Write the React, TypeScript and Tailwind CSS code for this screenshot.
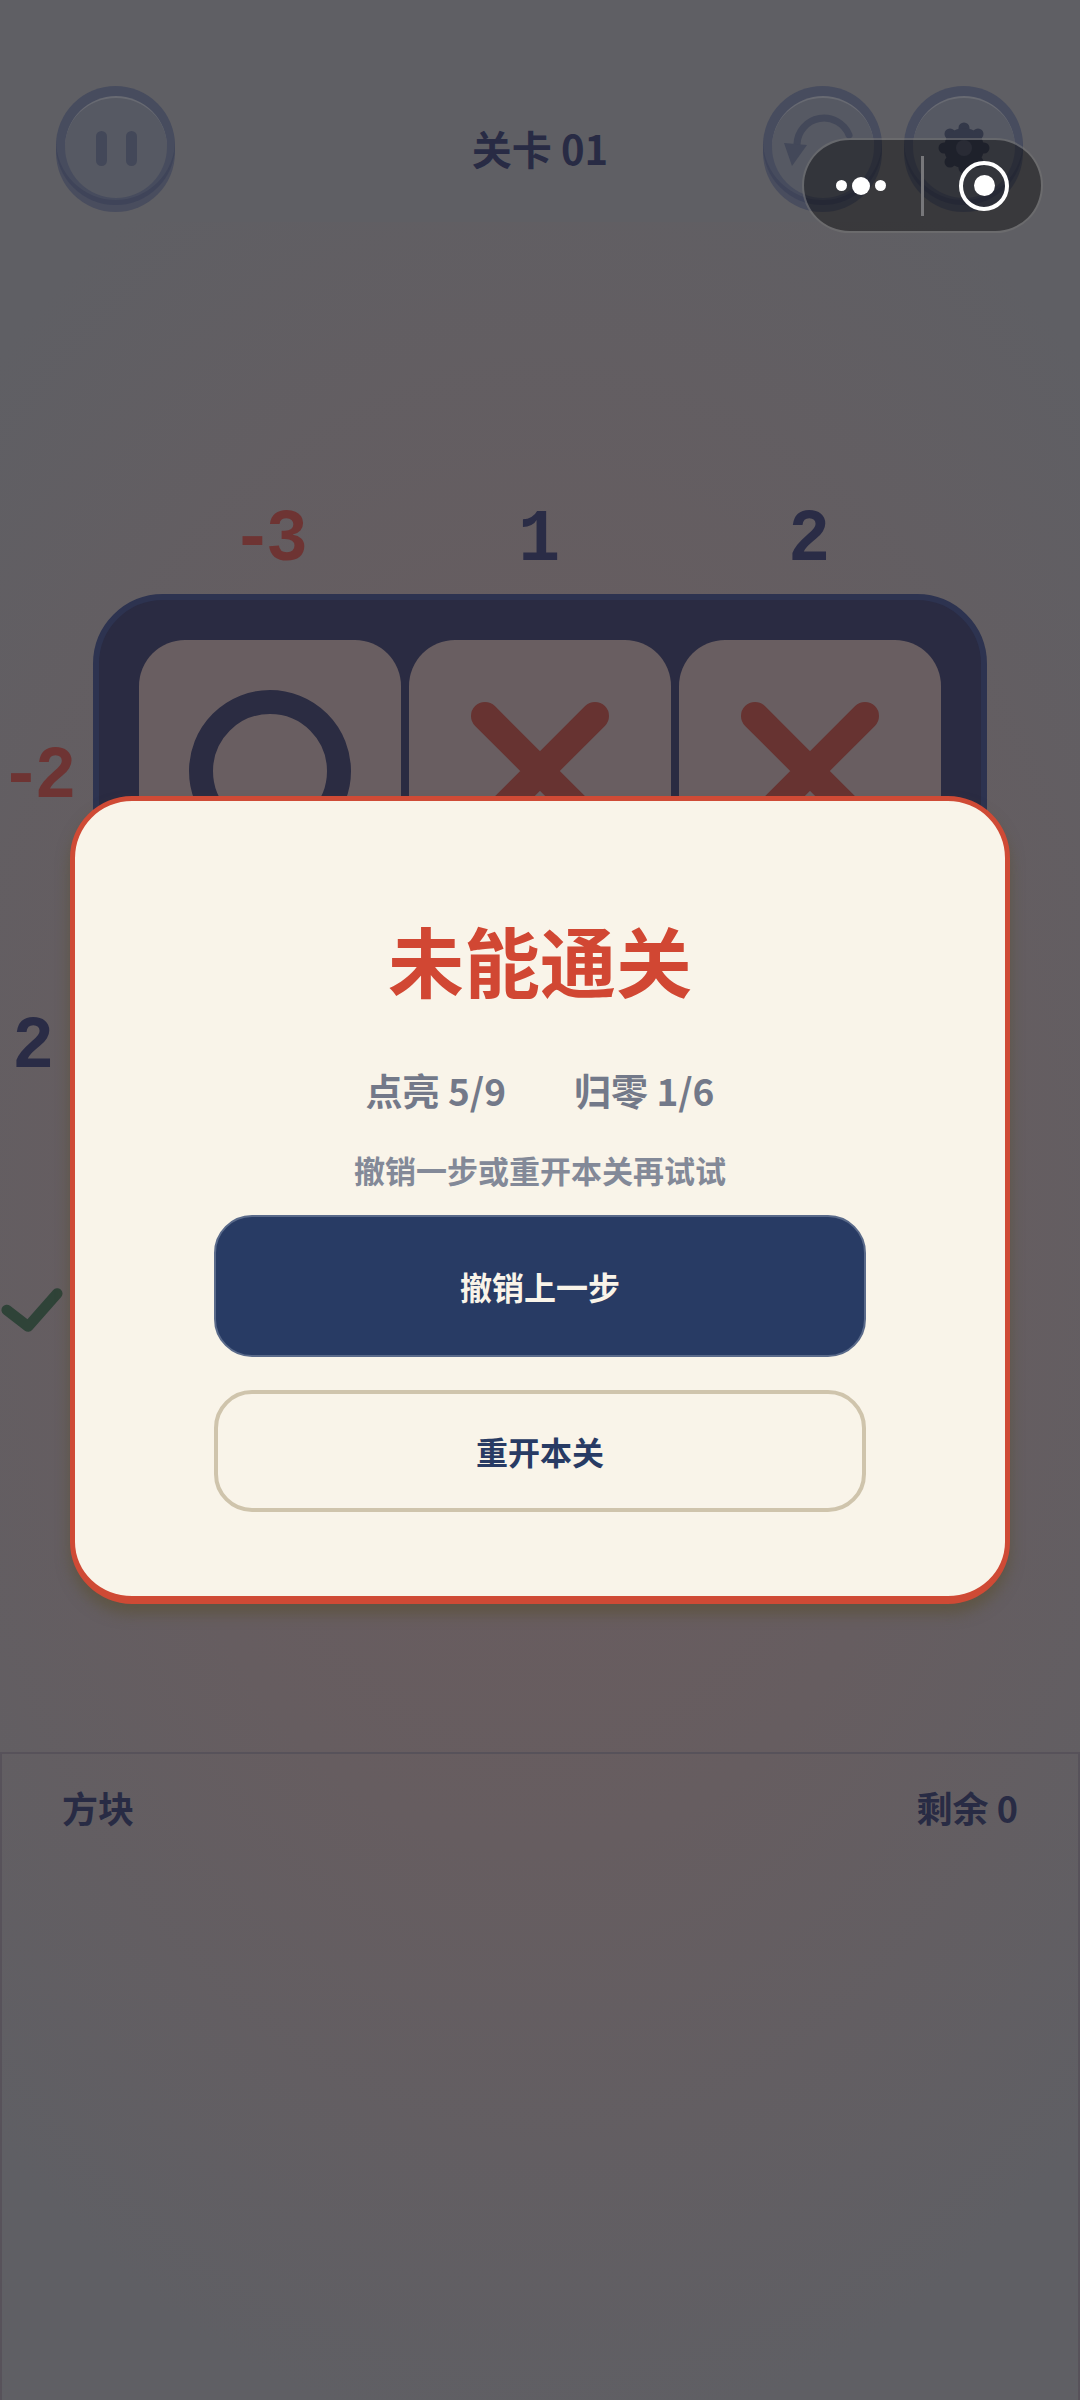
import React from "react";

const font = { fontFamily: '"Noto Sans CJK SC", "Noto Sans", sans-serif' };

function RoundButton({ children }: { children: React.ReactNode }) {
  return (
    <div className="w-[119px] h-[126px]">
      <div className="w-[119px] h-[119px] rounded-full bg-[#474c5e] shadow-[0_7px_0_#494d5e,inset_0_-5px_0_#3f4459] pt-[10px]">
        <div className="w-[102px] h-[102px] mx-auto rounded-full bg-[#565963] border-t-[2px] border-[#686a72] flex items-center justify-center">
          {children}
        </div>
      </div>
    </div>
  );
}

function Num({ v, red, flush }: { v: string; red?: boolean; flush?: boolean }) {
  return (
    <span
      className={`inline-block scale-x-[0.93] tracking-[-8px] text-[75px] leading-none font-bold ${flush ? "origin-left" : "-ml-[8px]"} ${red ? "text-[#6e3433]" : "text-[#2a2c46]"}`}
      style={{ fontFamily: '"Liberation Mono", monospace' }}
    >
      {v}
    </span>
  );
}

function Cell({ mark }: { mark?: "o" | "x" }) {
  return (
    <div className="w-[262px] h-[262px] rounded-[46px] bg-[#695e61] flex items-center justify-center">
      {mark === "o" && (
        <svg width="164" height="164" viewBox="0 0 164 164">
          <circle cx="82" cy="82" r="69" fill="none" stroke="#2b2c42" strokeWidth="24" />
        </svg>
      )}
      {mark === "x" && (
        <svg width="164" height="164" viewBox="0 0 164 164">
          <path d="M27 27 L137 137 M137 27 L27 137" stroke="#673331" strokeWidth="28" strokeLinecap="round" />
        </svg>
      )}
    </div>
  );
}

export default function App() {
  return (
    <div
      className="relative w-[1080px] h-[2400px] overflow-hidden flex flex-col bg-[radial-gradient(ellipse_75%_50%_at_50%_52%,#6b5c5e_0%,#665d60_50%,#5f5f64_100%)]"
      style={font}
    >
      {/* header */}
      <header className="h-[222px] shrink-0 bg-[#5f5f64] flex items-start justify-between pt-[86px] pl-[56px] pr-[57px] relative">
        <RoundButton>
          <svg width="60" height="50" viewBox="0 0 60 50">
            <rect x="10" y="8" width="11" height="35" rx="5.5" fill="#434859" />
            <rect x="40" y="8" width="11" height="35" rx="5.5" fill="#434859" />
          </svg>
        </RoundButton>
        <div className="absolute left-0 right-0 top-[122px] text-center text-[40px] leading-[52px] font-bold text-[#282b44]">
          关卡 01
        </div>
        <div className="flex gap-[22px]">
          <RoundButton>
            <svg width="102" height="100" viewBox="0 0 102 100">
              <path d="M77 37 A27 27 0 0 0 25 46" fill="none" stroke="#434859" strokeWidth="7" strokeLinecap="round" />
              <path d="M12 45 L35 47 L20 68 Z" fill="#434859" />
            </svg>
          </RoundButton>
          <RoundButton>
            <svg width="56" height="56" viewBox="0 0 56 56">
              <g stroke="#333849" strokeWidth="11" strokeLinecap="round">
                <path d="M28 8v40M8 28h40M14 14l28 28M42 14L14 42" />
              </g>
              <circle cx="28" cy="28" r="20" fill="#333849" />
              <circle cx="28" cy="28" r="8" fill="#454859" />
            </svg>
          </RoundButton>
        </div>
      </header>

      {/* board area */}
      <main className="grid grid-cols-[93px_894px] grid-rows-[372px_auto] h-[1530px] shrink-0">
        <div />
        <div className="flex items-end pb-[16px] pl-[46px] pr-[46px] gap-[8px]">
          <div className="w-[262px] text-center"><Num v="-3" red /></div>
          <div className="w-[262px] text-center"><Num v="1" /></div>
          <div className="w-[262px] text-center"><Num v="2" /></div>
        </div>
        <div className="pt-[46px] flex flex-col gap-[8px]">
          <div className="h-[262px] w-[74px] pt-[12px] flex items-center justify-start"><Num v="-2" red flush /></div>
          <div className="h-[262px] w-[68px] pt-[12px] flex items-center justify-center"><Num v="2" /></div>
          <div className="h-[262px] w-[64px] flex items-center justify-center">
            <svg width="66" height="50" viewBox="0 0 66 50">
              <path d="M7 24 L29 41 L59 7" fill="none" stroke="#2f4338" strokeWidth="11" strokeLinecap="round" strokeLinejoin="round" />
            </svg>
          </div>
        </div>
        <div className="h-[894px] rounded-[70px] bg-[#2a2b42] border-[6px] border-[#2d3350] p-[40px] grid grid-cols-3 gap-[8px] content-start">
          <Cell mark="o" />
          <Cell mark="x" />
          <Cell mark="x" />
          <Cell />
          <Cell />
          <Cell />
          <Cell />
          <Cell />
          <Cell />
        </div>
      </main>

      {/* tray */}
      <footer className="flex-1 border-t-[2px] border-x-[2px] border-[#57525a] flex items-start justify-between px-[60px] pt-[26px] text-[36px] leading-[54px] font-bold text-[#282b44]">
        <span>方块</span>
        <span>剩余 0</span>
      </footer>

      {/* dialog */}
      <div className="absolute inset-0 flex items-center justify-center">
        <div className="w-[940px] h-[808px] rounded-[62px] bg-[#f9f4e9] border-[5px] border-b-[8px] border-[#cf4a35] shadow-[0_10px_14px_rgba(90,80,50,0.6)] flex flex-col items-center pt-[108px]">
          <h1 className="text-[76px] leading-[100px] font-bold text-[#d14733]">未能通关</h1>
          <div className="mt-[55px] flex gap-[68px] text-[37px] leading-[52px] font-bold text-[#737989]">
            <span>点亮 5/9</span>
            <span>归零 1/6</span>
          </div>
          <p className="mt-[29px] text-[31px] leading-[50px] font-bold text-[#838998]">撤销一步或重开本关再试试</p>
          <button className="mt-[20px] w-[652px] h-[142px] rounded-[38px] bg-[#283b64] border-[2px] border-[#5a6a8a] text-[#f9f4e9] text-[32px] font-bold">
            撤销上一步
          </button>
          <button className="mt-[33px] w-[652px] h-[122px] rounded-[38px] border-[4px] border-[#cfc4ac] text-[#283b64] text-[32px] font-bold">
            重开本关
          </button>
        </div>
      </div>

      {/* capsule */}
      <div className="absolute left-[802px] top-[138px] w-[241px] h-[95px] rounded-[48px] bg-[#00000066] border-[2px] border-[#ffffff40] flex items-center">
        <div className="w-[117px] pr-[4px] flex items-center justify-center gap-[5px]">
          <span className="w-[11px] h-[11px] rounded-full bg-white" />
          <span className="w-[18px] h-[18px] rounded-full bg-white" />
          <span className="w-[11px] h-[11px] rounded-full bg-white" />
        </div>
        <div className="w-[3px] h-[60px] bg-[#77777a]" />
        <div className="flex-1 pl-[3px] flex items-center justify-center">
          <div className="w-[50px] h-[50px] rounded-full border-[4px] border-white flex items-center justify-center">
            <span className="w-[21px] h-[21px] rounded-full bg-white" />
          </div>
        </div>
      </div>
    </div>
  );
}
